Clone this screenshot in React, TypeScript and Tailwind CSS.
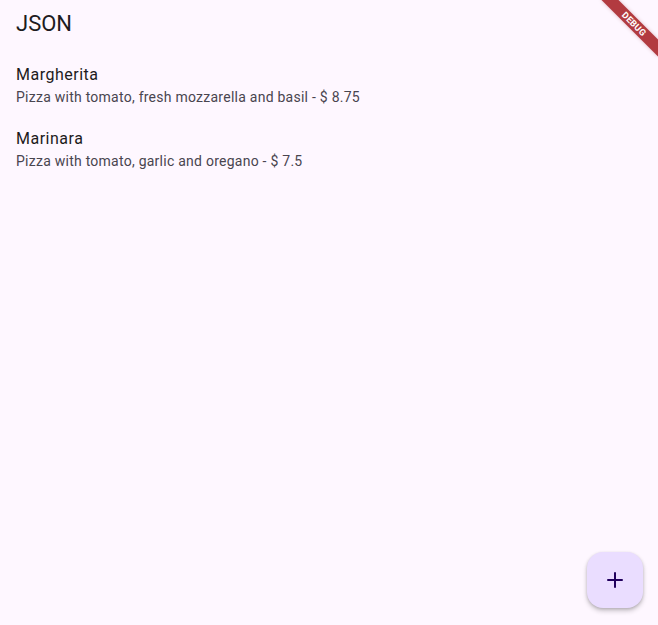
import { Plus } from "lucide-react";

const pizzas = [
  { name: "Margherita", desc: "Pizza with tomato, fresh mozzarella and basil - $ 8.75" },
  { name: "Marinara", desc: "Pizza with tomato, garlic and oregano - $ 7.5" },
];

export default function App() {
  return (
    <div
      className="relative h-screen w-full overflow-hidden bg-[#fef7ff]"
      style={{ fontFamily: "Roboto, 'Noto Sans', sans-serif" }}
    >
      {/* App bar */}
      <header className="h-[53px] px-4 pt-[10px]">
        <h1 className="text-[22px] leading-[28px] text-[#1d1b20]">JSON</h1>
      </header>

      {/* List */}
      <ul>
        {pizzas.map((p) => (
          <li key={p.name} className="flex flex-col px-4 py-[10px]">
            <span className="text-[16px] leading-[24px] tracking-[0.5px] text-[#1d1b20]">
              {p.name}
            </span>
            <span className="text-[14px] leading-[20px] tracking-[0.25px] text-[#49454f]">
              {p.desc}
            </span>
          </li>
        ))}
      </ul>

      {/* FAB */}
      <button className="absolute bottom-[17px] right-[15px] flex h-14 w-14 items-center justify-center rounded-2xl bg-[#eaddff] text-[#21005d] shadow-[0_3px_5px_rgba(0,0,0,0.2),0_1px_3px_rgba(0,0,0,0.15)]">
        <Plus className="h-6 w-6" strokeWidth={2} />
      </button>

      {/* Debug banner */}
      <div className="pointer-events-none absolute right-[-16px] top-[18px] flex h-3 w-20 rotate-45 items-center justify-center bg-[#b23b40] shadow-[0_0_4px_rgba(127,0,0,0.25)]">
        <span className="text-[9px] font-bold leading-none tracking-[0.2px] text-white">
          DEBUG
        </span>
      </div>
    </div>
  );
}
